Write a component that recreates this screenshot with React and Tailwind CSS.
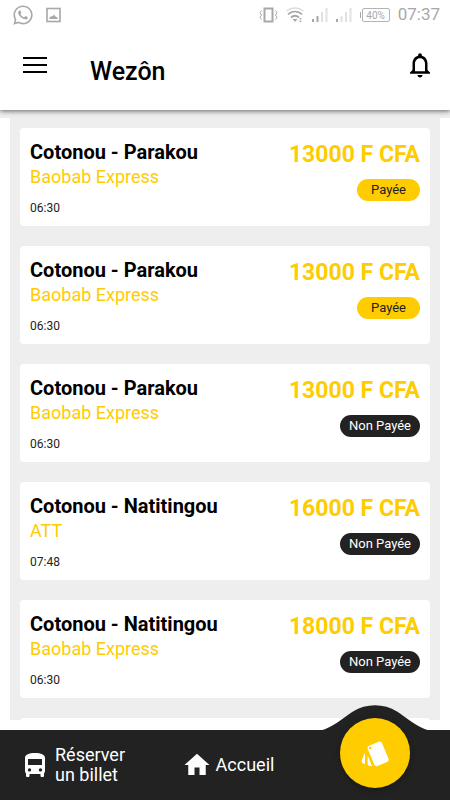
import { FaWhatsapp } from 'react-icons/fa'
import { MdHome, MdNotificationsNone, MdStyle } from 'react-icons/md'

// ── Data ────────────────────────────────────────────────────────────────────
const TICKETS = [
  { id: 1, route: 'Cotonou - Parakou',   company: 'Baobab Express', time: '06:30', price: 13000, paid: true  },
  { id: 2, route: 'Cotonou - Parakou',   company: 'Baobab Express', time: '06:30', price: 13000, paid: true  },
  { id: 3, route: 'Cotonou - Parakou',   company: 'Baobab Express', time: '06:30', price: 13000, paid: false },
  { id: 4, route: 'Cotonou - Natitingou', company: 'ATT',           time: '07:48', price: 16000, paid: false },
  { id: 5, route: 'Cotonou - Natitingou', company: 'Baobab Express', time: '06:30', price: 18000, paid: false },
]

// ── Icons ───────────────────────────────────────────────────────────────────
function MenuIcon() {
  return (
    <svg width="24" height="18" viewBox="0 0 24 18" fill="currentColor" aria-hidden="true">
      <path d="M0 1h24v2H0zM0 8h24v2H0zM0 15h24v2H0z" />
    </svg>
  )
}

function BusIcon() {
  return (
    <svg className="shrink-0" width="20" height="24" viewBox="0 0 20 24" fill="currentColor" aria-hidden="true">
      <path
        fillRule="evenodd"
        d="M0 5C0 1.500 4 0 10 0s10 1.500 10 5v13c0 1-.4 1.800-1 2.400V23a1 1 0 0 1-1 1h-1.500a1 1 0 0 1-1-1v-2h-11v2a1 1 0 0 1-1 1H2a1 1 0 0 1-1-1v-2.600C.4 19.800 0 19 0 18zM3 6v6h14V6zM4.500 15.200a1.700 1.700 0 1 0 0 3.400 1.700 1.700 0 0 0 0-3.400zM15.500 15.200a1.700 1.700 0 1 0 0 3.400 1.700 1.700 0 0 0 0-3.400z"
      />
    </svg>
  )
}

// ── Status bar ──────────────────────────────────────────────────────────────
function StatusBar() {
  return (
    <div className="flex h-[30px] items-center justify-between pl-3 pr-2.5 text-[#a8a8a8]">
      <div className="flex items-center gap-3">
        <FaWhatsapp size={22} />
        <svg width="16" height="16" viewBox="0 0 16 16" fill="none" aria-hidden="true">
          <rect x="1" y="1.500" width="13" height="13" stroke="currentColor" strokeWidth="1.600" />
          <path d="M3.500 12V10.500l2-1.500 1 .5 1.500-2 1.500 2 2 1V12z" fill="currentColor" />
        </svg>
      </div>
      <div className="flex items-center">
        {/* vibrate */}
        <svg width="19" height="16" viewBox="0 0 19 16" fill="none" stroke="currentColor" aria-hidden="true">
          <rect x="5.500" y="1.500" width="8" height="13" strokeWidth="2" />
          <path d="M2.500 3.500L1 5.500l1.500 2.500L1 10.500l1.500 2M16.500 3.500L18 5.500l-1.500 2.500 1.500 2.500-1.500 2" />
        </svg>
        {/* wifi */}
        <svg className="ml-2" width="18" height="16" viewBox="0 0 18 16" fill="none" stroke="currentColor" aria-hidden="true">
          <path d="M0.500 4C5.500 0 12.500 0 17.500 4" strokeWidth="1.500" opacity="0.4" />
          <path d="M2 7.500c4-4 10-4 14 0M5 10.500c2.500-2.200 5.500-2.200 8 0" strokeWidth="1.700" />
          <path d="M6.500 12h5L9 15z" fill="currentColor" stroke="none" />
          <path d="M14.500 11v1.500M14.500 13.500V15" strokeWidth="1.700" />
        </svg>
        {/* signal, SIM 1 and 2 */}
        <svg className="ml-2" width="16" height="14" viewBox="0 0 16 14" fill="currentColor" aria-hidden="true">
          <rect x="0" y="11" width="2" height="3" />
          <rect x="4.500" y="8" width="2" height="6" />
          <rect x="9" y="4" width="2" height="10" opacity="0.35" />
          <rect x="13.500" y="0" width="2" height="14" opacity="0.35" />
        </svg>
        <svg className="ml-2" width="16" height="14" viewBox="0 0 16 14" fill="currentColor" aria-hidden="true">
          <rect x="0" y="11" width="2" height="3" />
          <rect x="4.500" y="8" width="2" height="6" opacity="0.35" />
          <rect x="9" y="4" width="2" height="10" opacity="0.35" />
          <rect x="13.500" y="0" width="2" height="14" opacity="0.35" />
        </svg>
        <div className="ml-2 flex items-center">
          <span className="h-1.5 w-px bg-[#a8a8a8]" />
          <span className="ml-px flex h-[14px] w-7 items-center justify-center rounded-[2px] border border-[#b4b4b4] text-[10px]">
            40%
          </span>
        </div>
        <span className="ml-2 text-[17px]">07:37</span>
      </div>
    </div>
  )
}

// ── Header ──────────────────────────────────────────────────────────────────
function Header() {
  return (
    <header className="z-10 bg-white shadow-[0_1px_5px_rgba(0,0,0,0.6)]">
      <StatusBar />
      <div className="flex h-20 items-center pb-2.5 pl-[23px] pr-[15px]">
        <button type="button" aria-label="Menu">
          <MenuIcon />
        </button>
        <h1 className="ml-[43px] flex-1 pt-3.5 text-[25px] font-medium leading-8">Wezôn</h1>
        <button type="button" aria-label="Notifications">
          <MdNotificationsNone size={30} />
        </button>
      </div>
    </header>
  )
}

// ── Ticket card ─────────────────────────────────────────────────────────────
function StatusPill({ paid }) {
  return paid ? (
    <span className="rounded-full bg-[#ffcc00] px-3.5 text-[13px] leading-[22px] text-[#222222]">Payée</span>
  ) : (
    <span className="rounded-full bg-[#222222] px-[9px] text-[13px] leading-[22px] text-white">Non Payée</span>
  )
}

function TicketCard({ ticket }) {
  return (
    <li className="flex h-[98px] justify-between rounded bg-white px-2.5 py-[11px]">
      <div>
        <h2 className="text-xl font-bold leading-[26px]">{ticket.route}</h2>
        <p className="text-lg leading-6 text-[#ffcc00]">{ticket.company}</p>
        <p className="mt-2.5 text-xs leading-[18px] text-[#222222]">{ticket.time}</p>
      </div>
      <div className="flex flex-col items-end gap-2">
        <p className="text-[23px] font-bold leading-8 text-[#ffcc00]">{ticket.price} F CFA</p>
        <StatusPill paid={ticket.paid} />
      </div>
    </li>
  )
}

// ── Bottom navigation ───────────────────────────────────────────────────────
function BottomNav() {
  return (
    <nav className="relative mt-2.5 grid h-[70px] grid-cols-3 bg-[#222222] text-lg leading-5 text-white">
      <a href="#reserver" className="flex items-center gap-2.5 pl-[25px]">
        <BusIcon />
        <span>Réserver<br />un billet</span>
      </a>
      <a href="#accueil" className="flex items-center justify-center gap-1 pl-1.5">
        <MdHome size={30} />
        <span>Accueil</span>
      </a>
      <div className="relative flex justify-center">
        <svg className="absolute -top-[25px]" width="108" height="26" viewBox="0 0 108 26" fill="#222222" aria-hidden="true">
          <path d="M0 26V25.500C12 22 22 13 32 6.500C45-2 63-2 76 6.500C86 13 96 22 108 25.500V26z" />
        </svg>
        <a
          href="#billets"
          aria-label="Mes billets"
          className="absolute -top-3 flex size-[70px] items-center justify-center rounded-full bg-[#ffcc00] shadow-[0_2px_6px_rgba(0,0,0,0.3)]"
        >
          <MdStyle size={31} />
        </a>
      </div>
    </nav>
  )
}

// ── Root export ─────────────────────────────────────────────────────────────
export default function App() {
  return (
    <div className="flex h-screen flex-col bg-white font-[Roboto,sans-serif] text-black">
      <Header />
      <main className="min-h-0 flex-1 overflow-y-auto border-t-8 border-[#eeeeee] [scrollbar-width:none]">
        <ul className="mx-2.5 flex flex-col gap-5 bg-[#eeeeee] px-2.5 pt-2.5">
          {TICKETS.map(t => <TicketCard key={t.id} ticket={t} />)}
          {/* next page placeholder */}
          <li className="h-[98px] rounded bg-white" />
        </ul>
      </main>
      <BottomNav />
    </div>
  )
}
